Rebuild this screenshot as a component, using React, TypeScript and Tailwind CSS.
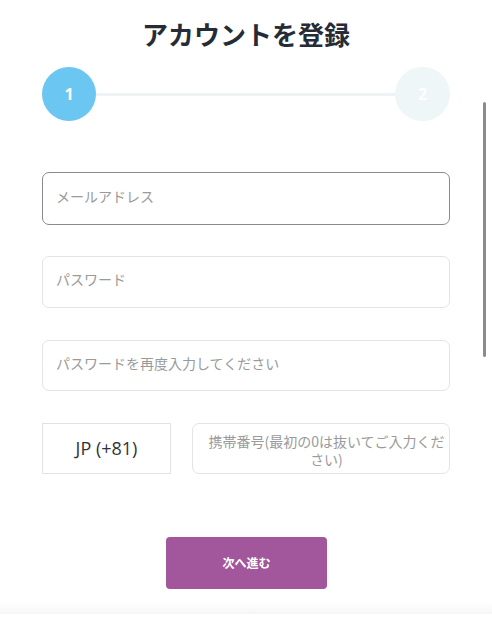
import React from "react";

export default function App() {
  const cjk = { fontFamily: '"Noto Sans CJK JP", "Noto Sans", sans-serif' };
  return (
    <div className="relative w-[492px] h-[626px] bg-white overflow-hidden" style={cjk}>
      <div className="flex flex-col px-[42px] pt-[14px]">
        <h1 className="text-center text-[26px] leading-[39px] font-bold text-[#262c36]">アカウントを登録</h1>

        <div className="mt-[14px] flex items-center h-[54px]">
          <div className="w-[54px] h-[54px] rounded-full bg-[#6bc6f1] flex items-center justify-center text-white text-[16px] font-bold" style={{ fontFamily: '"Open Sans", sans-serif' }}>1</div>
          <div className="flex-1 h-[3px] bg-[#eef3f5]" />
          <div className="w-[55px] h-[54px] rounded-full bg-[#eef6f7] flex items-center justify-center text-white text-[16px] font-bold" style={{ fontFamily: '"Open Sans", sans-serif' }}>2</div>
        </div>

        <input
          className="mt-[51px] h-[53px] w-full rounded-[7px] border border-[#8a8a8a] pl-[13px] pr-[13px] pb-[6px] text-[14px] outline-none placeholder:text-[#9a9a9a]"
          placeholder="メールアドレス"
          style={cjk}
        />
        <input
          className="mt-[31px] h-[52px] w-full rounded-[7px] border border-[#e4e4e4] pl-[13px] pr-[13px] pb-[6px] text-[14px] outline-none placeholder:text-[#9a9a9a]"
          placeholder="パスワード"
          style={cjk}
        />
        <input
          className="mt-[32px] h-[51px] w-full rounded-[7px] border border-[#e4e4e4] pl-[13px] pr-[13px] pb-[6px] text-[14px] outline-none placeholder:text-[#9a9a9a]"
          placeholder="パスワードを再度入力してください"
          style={cjk}
        />

        <div className="mt-[32px] flex gap-[21px] h-[51px]">
          <div className="w-[129px] h-full border border-[#e2e2e2] flex items-center justify-center text-[18px] text-[#333]" style={{ fontFamily: '"Open Sans", sans-serif' }}>
            JP (+81)
          </div>
          <div className="flex-1 h-full rounded-[7px] border border-[#e4e4e4] flex items-center justify-center pl-[12px] pr-[1px] pt-[3px] text-center text-[14px] leading-[18px] text-[#9a9a9a]">
            携帯番号(最初の0は抜いてご入力ください)
          </div>
        </div>

        <div className="mt-[63px] flex justify-center">
          <button className="ml-[1px] w-[161px] h-[52px] rounded-[4px] bg-[#a2569b] text-white text-[12px] font-bold" style={cjk}>
            次へ進む
          </button>
        </div>
      </div>

      <div className="absolute left-0 right-0 top-[601px] h-[13px] bg-gradient-to-b from-white to-[#f6f6f6]" />
      <div className="absolute left-[483px] top-[102px] w-[3px] h-[255px] bg-[#8c8c8c] rounded-full" />
    </div>
  );
}
